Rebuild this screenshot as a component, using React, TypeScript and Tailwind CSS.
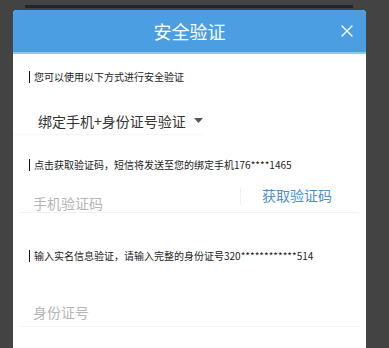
import React from 'react';

const Hint: React.FC<{ children: React.ReactNode; className?: string }> = ({ children, className }) => (
  <div className={`flex h-[14px] items-center pl-[16px] ${className ?? ''}`}>
    <span className="h-[12px] w-px bg-[#111]" />
    <span className="ml-[4px] text-[10px] leading-[14px] text-[#222]">{children}</span>
  </div>
);

const App: React.FC = () => {
  return (
    <div className="h-[348px] w-[389px] overflow-hidden bg-[#434343] pt-[5px] font-['Noto_Sans_CJK_SC',sans-serif]">
      {/* card behind the dialog */}
      <div className="ml-[25px] h-[3px] w-[328px] bg-[#1c2731]" />

      <div className="ml-[13px] mt-[2px] h-[340px] w-[353px] overflow-hidden rounded-t-[4px] bg-white">
        <div className="relative flex h-[44px] items-center justify-center border-b-2 border-[#8dc8f1] bg-[#4b9ee2]">
          <span className="text-[18px] leading-[24px] text-white">安全验证</span>
          <svg
            className="absolute right-[13px] top-[15px]"
            width="12"
            height="12"
            viewBox="0 0 12 12"
            fill="none"
            stroke="white"
            strokeWidth="1.4"
            strokeLinecap="round"
          >
            <path d="M1 1L11 11M11 1L1 11" />
          </svg>
        </div>

        <Hint className="mt-[16px]">您可以使用以下方式进行安全验证</Hint>

        <div className="mt-[23px] flex h-[28px] w-[190px] items-center border-b border-[#f6f6f6] pl-[25px]">
          <span className="text-[14px] leading-[20px] text-[#333]">绑定手机+身份证号验证</span>
          <svg className="ml-[8px]" width="9" height="5" viewBox="0 0 9 5">
            <path d="M0 0H9L4.5 5Z" fill="#555" />
          </svg>
        </div>

        <Hint className="mt-[23px]">点击获取验证码，短信将发送至您的绑定手机176****1465</Hint>

        <div className="mx-[7px] mt-[8px] flex h-[33px] items-start border-b border-[#f2f2f2]">
          <span className="w-[220px] pl-[13px] pt-[13px] text-[14px] leading-[20px] text-[#b5b5b5]">手机验证码</span>
          <span className="mt-[8px] h-[17px] w-px bg-[#f0f0f0]" />
          <span className="ml-[21px] pt-[5px] text-[14px] leading-[20px] text-[#4a8fcb]">获取验证码</span>
        </div>

        <Hint className="mt-[36px]">输入实名信息验证，请输入完整的身份证号320************514</Hint>

        <div className="mx-[7px] mt-[36px] h-[28px] border-b border-[#f4f4f4]">
          <span className="pl-[13px] text-[14px] leading-[20px] text-[#b5b5b5]">身份证号</span>
        </div>
      </div>
    </div>
  );
};

export default App;
